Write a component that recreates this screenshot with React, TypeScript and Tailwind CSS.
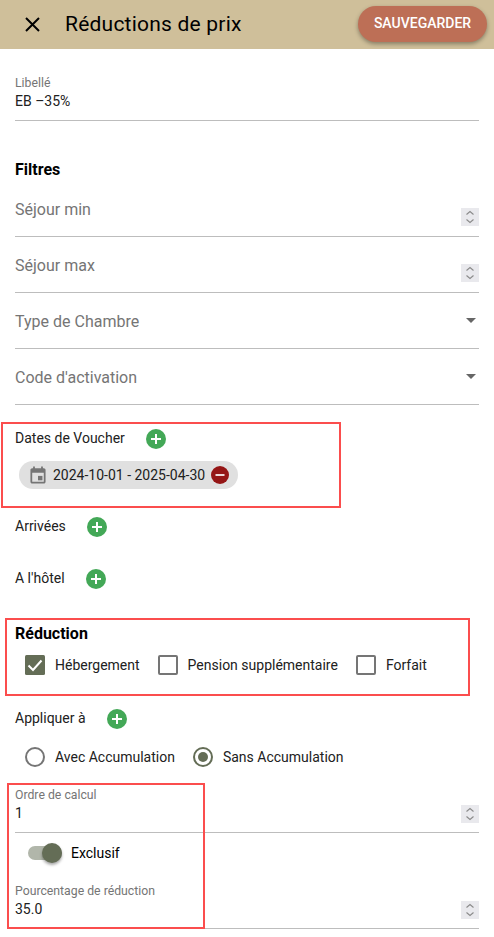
import React from "react";

const Spin = () => (
  <div className="w-[18px] h-[18px] bg-[#e9e9ed] flex items-center justify-center shrink-0">
    <svg width="12" height="16" viewBox="0 0 12 16" fill="none" stroke="#8a8a8a" strokeWidth="1.1">
      <path d="M2.5 5.5 6 2.5l3.5 3M2.5 10.5 6 13.5l3.5-3" />
    </svg>
  </div>
);

const Plus = () => (
  <svg width="20" height="20" viewBox="0 0 20 20" className="shrink-0 translate-y-[1px]">
    <circle cx="10" cy="10" r="10" fill="#43a857" />
    <path d="M10 5v10M5 10h10" stroke="#fff" strokeWidth="2" />
  </svg>
);

const Caret = () => (
  <svg width="10" height="5" viewBox="0 0 10 5" className="shrink-0 mr-[3px]">
    <path d="M0 0h10L5 5z" fill="#666" />
  </svg>
);

const Filter = ({ label, right }: { label: string; right: React.ReactNode }) => (
  <div className="h-[56px] border-b border-[#bdbdbd] flex items-center justify-between">
    <span className="text-[16px] leading-[20px] text-[#757575] translate-y-[1px]">{label}</span>
    {right}
  </div>
);

const Check = ({ label, on }: { label: string; on?: boolean }) => (
  <div className="flex items-center gap-[10px]">
    {on ? (
      <svg width="20" height="20" viewBox="0 0 20 20">
        <rect width="20" height="20" rx="1.5" fill="#646d56" />
        <path d="M3.5 10.5 8 15l8.5-9.5" fill="none" stroke="#fff" strokeWidth="2" />
      </svg>
    ) : (
      <div className="w-[20px] h-[20px] rounded-[2px] border-2 border-[#757575]" />
    )}
    <span>{label}</span>
  </div>
);

const Radio = ({ label, on }: { label: string; on?: boolean }) => (
  <div className="flex items-center gap-[10px]">
    <div className={`w-[20px] h-[20px] rounded-full border-2 flex items-center justify-center ${on ? "border-[#646d56]" : "border-[#757575]"}`}>
      {on && <div className="w-[10px] h-[10px] rounded-full bg-[#646d56]" />}
    </div>
    <span>{label}</span>
  </div>
);

const NumField = ({ label, value, h }: { label: string; value: string; h: string }) => (
  <div className={`relative border-b border-[#bdbdbd] ${h}`}>
    <div className="text-[12.25px] leading-[14px] text-[#757575]">{label}</div>
    <div className="text-[14px] leading-[20px] mt-[1px] text-[#212121]">{value}</div>
    <div className="absolute right-0 bottom-[9px]"><Spin /></div>
  </div>
);

const Annot = ({ cls }: { cls: string }) => (
  <div className={`absolute border-2 border-[#fb4d4d] pointer-events-none ${cls}`} />
);

export default function App() {
  return (
    <div className="relative w-[494px] h-[937px] overflow-hidden bg-white text-[#212121] text-[14px] font-['Roboto',sans-serif]">
      <header className="h-[49px] bg-[#cfbf9a] flex items-center pl-[24px] pr-[7px]">
        <svg width="17" height="17" viewBox="0 0 17 17" fill="none" stroke="#000" strokeWidth="2" className="shrink-0">
          <path d="M2 2l13 13M15 2 2 15" />
        </svg>
        <h1 className="ml-[24px] text-[21px] tracking-[0.22px] font-normal text-black">Réductions de prix</h1>
        <button className="ml-auto w-[129px] h-[36px] rounded-full bg-[#bd6f56] text-white text-[14px] font-medium shadow-[0_2px_4px_rgba(0,0,0,0.35)] -translate-y-[1px]">
          SAUVEGARDER
        </button>
      </header>

      <main className="px-[15px]">
        <div className="pt-[27px] h-[72px] border-b border-[#bdbdbd]">
          <div className="text-[12.25px] leading-[14px] text-[#757575]">Libellé</div>
          <div className="text-[14px] leading-[20px] mt-[1px]">EB –35%</div>
        </div>

        <h2 className="mt-[39px] text-[16px] leading-[20px] font-bold text-black">Filtres</h2>

        <div className="mt-[1px]">
          <Filter label="Séjour min" right={<div className="translate-y-[8px]"><Spin /></div>} />
          <Filter label="Séjour max" right={<div className="translate-y-[8px]"><Spin /></div>} />
          <Filter label="Type de Chambre" right={<Caret />} />
          <Filter label="Code d'activation" right={<Caret />} />
        </div>

        <div className="mt-[23px] flex items-center h-[20px]">
          <span className="w-[131px]">Dates de Voucher</span>
          <Plus />
        </div>
        <div className="mt-[13px] ml-[4px] h-[28px] w-[219px] rounded-full bg-[#e0e0e0] flex items-center pl-[11px]">
          <svg width="16" height="18" viewBox="0 0 18 20" className="shrink-0">
            <path d="M15.5 2.5h-1V.5h-2v2h-7V.5h-2v2h-1c-1.1 0-2 .9-2 2v13c0 1.1.9 2 2 2h13c1.1 0 2-.9 2-2v-13c0-1.1-.9-2-2-2zm0 15h-13v-10h13v10z" fill="#757575" />
            <rect x="9" y="11" width="5" height="5" fill="#757575" />
          </svg>
          <span className="ml-[7px] whitespace-nowrap text-[#212121]">2024-10-01 - 2025-04-30</span>
          <svg width="18" height="18" viewBox="0 0 18 18" className="ml-[6px] shrink-0">
            <circle cx="9" cy="9" r="9" fill="#951616" />
            <path d="M4.5 9h9" stroke="#ecd9d9" strokeWidth="2" />
          </svg>
        </div>

        <div className="mt-[27px] flex items-center h-[20px]">
          <span className="w-[72px]">Arrivées</span>
          <Plus />
        </div>
        <div className="mt-[32px] flex items-center h-[20px]">
          <span className="w-[71px]">A l'hôtel</span>
          <Plus />
        </div>

        <h2 className="mt-[36px] text-[16px] leading-[20px] font-bold text-black">Réduction</h2>
        <div className="mt-[11px] ml-[10px] flex items-center h-[20px] gap-[18px]">
          <Check label="Hébergement" on />
          <Check label="Pension supplémentaire" />
          <Check label="Forfait" />
        </div>

        <div className="mt-[33px] flex items-center h-[20px]">
          <span className="w-[92px]">Appliquer à</span>
          <Plus />
        </div>
        <div className="mt-[19px] ml-[10px] flex items-center h-[20px] gap-[18px]">
          <Radio label="Avec Accumulation" />
          <Radio label="Sans Accumulation" on />
        </div>

        <div className="mt-[21px]">
          <NumField label="Ordre de calcul" value="1" h="h-[45px]" />
        </div>
        <div className="ml-[13px] mt-[8px] flex items-center h-[24px]">
          <div className="relative w-[34px] h-[14px] rounded-full bg-[#b1b6aa]">
            <div className="absolute right-0 top-[-3px] w-[20px] h-[20px] rounded-full bg-[#646d56] shadow-[0_2px_3px_rgba(0,0,0,0.35)]" />
          </div>
          <span className="ml-[9px] text-black">Exclusif</span>
        </div>
        <div className="mt-[19px]">
          <NumField label="Pourcentage de réduction" value="35.0" h="h-[45px]" />
        </div>
      </main>

      <Annot cls="left-[1px] top-[422px] w-[340px] h-[86px]" />
      <Annot cls="left-[5px] top-[618px] w-[465px] h-[78px]" />
      <Annot cls="left-[7px] top-[783px] w-[198px] h-[146px]" />
    </div>
  );
}
